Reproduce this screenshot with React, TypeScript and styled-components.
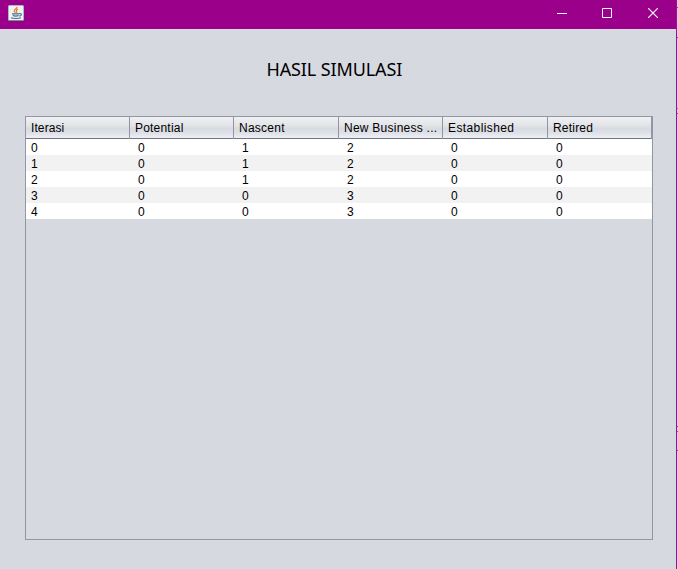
import React from "react";
import styled, { createGlobalStyle } from "styled-components";

const GlobalStyle = createGlobalStyle`
  * { box-sizing: border-box; }
  body { margin: 0; overflow: hidden; background: #e6e4e9; }
`;

const Desktop = styled.div`
  display: flex;
  width: 678px;
  height: 569px;
  background: #d8d5dc;
`;

const Window = styled.main`
  display: flex;
  flex-direction: column;
  width: 677px;
  height: 569px;
  background: #d6d9e0;
  border-right: 1px solid #b4009e;
  font-family: "Liberation Sans", Arial, sans-serif;
  color: #000;
`;

const DesktopEdge = styled.div`
  flex: 1;
  display: flex;
  flex-direction: column;
`;

const EdgeMark = styled.i<{ $gap: number; $color?: string }>`
  height: 1px;
  margin-top: ${(p) => p.$gap}px;
  background: ${(p) => p.$color ?? "#8d5a8c"};
`;

const TitleBar = styled.header`
  display: flex;
  justify-content: space-between;
  height: 29px;
  flex: none;
  padding: 5px 0 0 8px;
  background: #9a0089;
`;

const Controls = styled.div`
  display: flex;
  margin-top: -5px;
`;

const ControlButton = styled.button<{ $width: number }>`
  display: flex;
  justify-content: center;
  width: ${(p) => p.$width}px;
  height: 29px;
  padding: 8px 0 0;
  border: 0;
  background: transparent;
`;

const Heading = styled.h1`
  margin: 28px 0 0 266.5px;
  height: 25px;
  font: 400 18px/25px "Noto Sans", Tahoma, sans-serif;
  letter-spacing: -0.12px;
  white-space: nowrap;
`;

const ScrollPane = styled.section`
  width: 628px;
  height: 424px;
  margin: 34px 0 0 25px;
  border: 1px solid #9297a1;
`;

const GridRow = styled.div`
  display: grid;
  grid-template-columns: 104px 104px 105px 104px 105px 104px;
`;

const HeaderRow = styled(GridRow)`
  height: 22px;
  border-bottom: 1px solid #6f7682;
  background: linear-gradient(#f0f1f3 0, #e2e4e8 40%, #d8dbe1 55%, #dde0e6 75%, #eef0f5 100%);
`;

const HeaderCell = styled.div<{ $spacing: number }>`
  padding-left: 5px;
  border-right: 1px solid #90959f;
  font-size: 12px;
  line-height: 22px;
  letter-spacing: ${(p) => p.$spacing}px;
  white-space: nowrap;
`;

const DataRow = styled(GridRow)`
  height: 16px;
  background: #fff;
  &:nth-child(odd) { background: #f2f2f2; }
`;

const DataCell = styled.div`
  padding-left: 8px;
  font-size: 12px;
  line-height: 18px;
  &:first-child { padding-left: 5px; }
`;

const columns = [
  { label: "Iterasi", spacing: 0.1 },
  { label: "Potential", spacing: 0.2 },
  { label: "Nascent", spacing: 0.25 },
  { label: "New Business ...", spacing: 0.25 },
  { label: "Established", spacing: 0.4 },
  { label: "Retired", spacing: 0.2 },
];

const rows = [
  [0, 0, 1, 2, 0, 0],
  [1, 0, 1, 2, 0, 0],
  [2, 0, 1, 2, 0, 0],
  [3, 0, 0, 3, 0, 0],
  [4, 0, 0, 3, 0, 0],
];

function JavaIcon() {
  return (
    <svg width="16" height="16" viewBox="0 0 16 16" fill="none">
      <rect x="0.5" y="0.5" width="15" height="15" rx="0.8" fill="#f1f3f3" stroke="#a9bac4" />
      <path d="M1 15.5h14" stroke="#6d8ca0" />
      <path d="M9 2C9.4 4 5.8 4.2 6.2 6c.2.8.9 1.1 1.1 1.8M10 4.4C8.2 5 8 5.6 8.6 6.4c.4.5.2 1-.4 1.4" stroke="#e87722" strokeWidth="1.2" />
      <path d="M4 8.9h7M4.8 10.6c1.4.5 4.4.5 5.8 0M11 8.6c3.2-.6 3.2 2 .2 2.5M3 12.7c2 1 8 1 10 0" stroke="#44718f" strokeWidth="1.1" />
    </svg>
  );
}

export default function App() {
  return (
    <Desktop>
      <GlobalStyle />
      <Window>
        <TitleBar>
          <JavaIcon />
          <Controls>
            <ControlButton $width={45} aria-label="Minimize">
              <svg width="10" height="11"><path d="M0 5.5h10" stroke="#fff" /></svg>
            </ControlButton>
            <ControlButton $width={45} aria-label="Maximize">
              <svg width="10" height="10"><path d="M.5.5h9v9h-9z" stroke="#fff" fill="none" /></svg>
            </ControlButton>
            <ControlButton $width={47} aria-label="Close">
              <svg width="10" height="10"><path d="M0 0l10 10M10 0L0 10" stroke="#fff" strokeWidth="1.15" /></svg>
            </ControlButton>
          </Controls>
        </TitleBar>
        <Heading>HASIL SIMULASI</Heading>
        <ScrollPane>
          <HeaderRow>
            {columns.map((c) => (
              <HeaderCell key={c.label} $spacing={c.spacing}>{c.label}</HeaderCell>
            ))}
          </HeaderRow>
          {rows.map((row) => (
            <DataRow key={row[0]}>
              {row.map((value, i) => <DataCell key={i}>{value}</DataCell>)}
            </DataRow>
          ))}
        </ScrollPane>
      </Window>
      <DesktopEdge>
        <EdgeMark $gap={7} />
        <EdgeMark $gap={29} />
        <EdgeMark $gap={70} $color="#d0703c" />
        <EdgeMark $gap={4} />
        <EdgeMark $gap={312} />
        <EdgeMark $gap={4} />
        <EdgeMark $gap={18} />
      </DesktopEdge>
    </Desktop>
  );
}
